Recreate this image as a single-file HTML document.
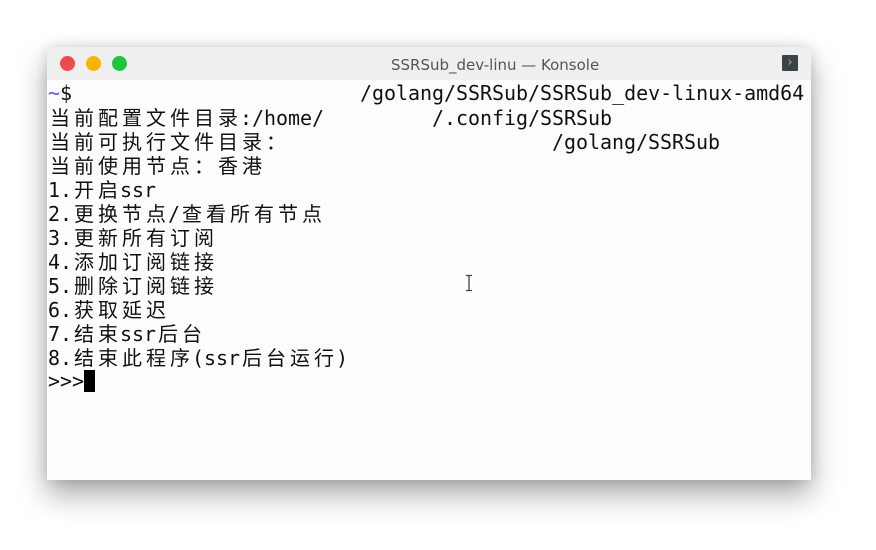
<!DOCTYPE html>
<html><head><meta charset="utf-8"><style>
html,body{margin:0;padding:0;background:#fff;width:876px;height:550px;overflow:hidden;position:relative}
.win{position:absolute;left:47px;top:47px;width:764px;height:433px;background:#fdfdfd;border-radius:6px 6px 0 0;box-shadow:0 14px 30px rgba(0,0,0,0.35),0 0 12px rgba(0,0,0,0.12);overflow:hidden}
.tb{position:absolute;left:0;top:0;width:100%;height:33px;background:#efefef}
.dot{position:absolute;top:9px;width:15px;height:15px;border-radius:50%}
.title{position:absolute;left:344px;top:9px;font:15px "DejaVu Sans","Liberation Sans",sans-serif;color:#555;white-space:nowrap}
.ic{position:absolute;left:735px;top:8px;width:16px;height:16px;background:#3d4447;border-radius:1px;color:#aaa;font:13px "DejaVu Sans",sans-serif;line-height:16px;text-align:center}
.ln{position:absolute;left:48px;height:24px;line-height:24px;font-family:"DejaVu Sans Mono",monospace;font-size:20px;color:#111;white-space:pre;letter-spacing:-0.04px}
.c{display:inline-block;width:24px;text-align:center;font-family:"WenQuanYi Zen Hei","Noto Sans CJK SC",sans-serif;font-style:normal;font-size:20px}
.cur{display:inline-block;width:11px;height:22px;background:#000;vertical-align:-4px}
</style></head><body>
<div class="win">
<div class="tb">
<div class="dot" style="left:13px;background:#f0494f"></div>
<div class="dot" style="left:39px;background:#f7b500"></div>
<div class="dot" style="left:65px;background:#1fc63c"></div>
<div class="title">SSRSub_dev-linu — Konsole</div>
<div class="ic">›</div>
</div>
</div>
<div class="ln" style="top:81px"><span style="color:#5555ff">~</span>$                        /golang/SSRSub/SSRSub_dev-linux-amd64</div>
<div class="ln" style="top:105px"><i class="c">当</i><i class="c">前</i><i class="c">配</i><i class="c">置</i><i class="c">文</i><i class="c">件</i><i class="c">目</i><i class="c">录</i>:/home/         /.config/SSRSub</div>
<div class="ln" style="top:129px"><i class="c">当</i><i class="c">前</i><i class="c">可</i><i class="c">执</i><i class="c">行</i><i class="c">文</i><i class="c">件</i><i class="c">目</i><i class="c">录</i><i class="c">：</i>                      /golang/SSRSub</div>
<div class="ln" style="top:153px"><i class="c">当</i><i class="c">前</i><i class="c">使</i><i class="c">用</i><i class="c">节</i><i class="c">点</i><i class="c">：</i><i class="c">香</i><i class="c">港</i></div>
<div class="ln" style="top:177px">1.<i class="c">开</i><i class="c">启</i>ssr</div>
<div class="ln" style="top:201px">2.<i class="c">更</i><i class="c">换</i><i class="c">节</i><i class="c">点</i>/<i class="c">查</i><i class="c">看</i><i class="c">所</i><i class="c">有</i><i class="c">节</i><i class="c">点</i></div>
<div class="ln" style="top:225px">3.<i class="c">更</i><i class="c">新</i><i class="c">所</i><i class="c">有</i><i class="c">订</i><i class="c">阅</i></div>
<div class="ln" style="top:249px">4.<i class="c">添</i><i class="c">加</i><i class="c">订</i><i class="c">阅</i><i class="c">链</i><i class="c">接</i></div>
<div class="ln" style="top:273px">5.<i class="c">删</i><i class="c">除</i><i class="c">订</i><i class="c">阅</i><i class="c">链</i><i class="c">接</i></div>
<div class="ln" style="top:297px">6.<i class="c">获</i><i class="c">取</i><i class="c">延</i><i class="c">迟</i></div>
<div class="ln" style="top:321px">7.<i class="c">结</i><i class="c">束</i>ssr<i class="c">后</i><i class="c">台</i></div>
<div class="ln" style="top:345px">8.<i class="c">结</i><i class="c">束</i><i class="c">此</i><i class="c">程</i><i class="c">序</i>(ssr<i class="c">后</i><i class="c">台</i><i class="c">运</i><i class="c">行</i>)</div>
<div class="ln" style="top:369px">&gt;&gt;&gt;<span class="cur"></span></div>
<svg style="position:absolute;left:464px;top:274px" width="10" height="18"><path d="M2 1.5H8M5 1.5V16.5M2 16.5H8" stroke="#444" stroke-width="1.3" fill="none"/></svg>
</body></html>
